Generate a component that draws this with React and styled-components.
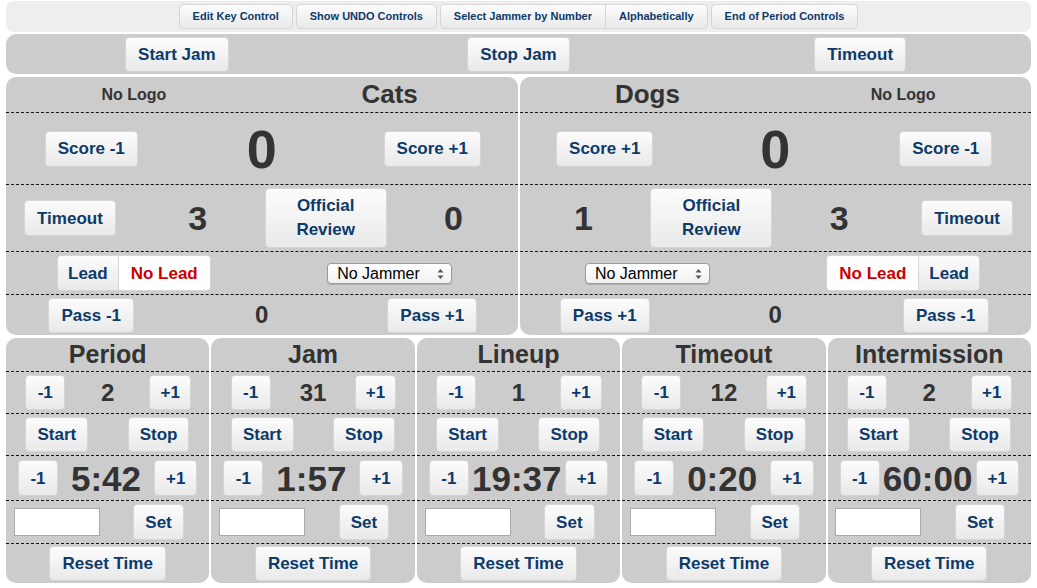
import React from "react";
import styled, { createGlobalStyle } from "styled-components";

const GlobalStyle = createGlobalStyle`
  body {
    margin: 0;
    background: #fff;
    font-family: "Liberation Sans", Arial, Helvetica, sans-serif;
  }
`;

const Page = styled.div`
  padding: 1px 6px 0;
  display: flex;
  flex-direction: column;
`;

const Toolbar = styled.div`
  height: 31px;
  background: #eee;
  border-radius: 8px;
  display: flex;
  align-items: center;
  justify-content: center;
  gap: 3px;
`;

const Btn = styled.button`
  font-family: inherit;
  font-weight: bold;
  font-size: ${(p) => p.$size || 17}px;
  color: #0c3a6b;
  height: ${(p) => p.$h || 35}px;
  min-width: ${(p) => p.$minW || 0}px;
  padding: 0 ${(p) => p.$pad ?? 12}px;
  background: linear-gradient(#fcfcfc, #e9e9e9);
  border: 1px solid #d6d6d6;
  border-radius: 4px;
  cursor: pointer;
  white-space: nowrap;
  line-height: 1;
`;

const ButtonGroup = styled.div`
  display: inline-flex;
  border-radius: 4px;
  overflow: hidden;
  border: 1px solid #d6d6d6;

  & > ${Btn} {
    border: none;
    border-radius: 0;
  }
  & > ${Btn} + ${Btn} {
    border-left: 1px solid #d6d6d6;
  }
`;

const WhiteBtn = styled(Btn)`
  background: #fff;
  color: #cc0000;
`;

const ReviewBtn = styled(Btn)`
  width: 122px;
  height: 60px;
  white-space: normal;
  line-height: 24px;
`;

const JamBar = styled.div`
  margin-top: 2px;
  height: 40px;
  background: #ccc;
  border-radius: 10px;
  display: grid;
  grid-template-columns: repeat(3, 1fr);
  align-items: center;
  justify-items: center;
`;

const Teams = styled.div`
  margin-top: 3px;
  display: grid;
  grid-template-columns: 1fr 1fr;
  gap: 2px;
`;

const Panel = styled.div`
  background: #ccc;
  border-radius: 10px;
  display: flex;
  flex-direction: column;
  overflow: hidden;
  color: #333;
`;

const Row = styled.div`
  box-sizing: border-box;
  height: ${(p) => p.$h}px;
  display: grid;
  grid-template-columns: ${(p) => p.$cols || "1fr"};
  padding: 0 ${(p) => p.$pad || 0}px;
  align-items: center;
  justify-items: center;
  border-bottom: ${(p) => (p.$last ? "none" : "1px dashed #111")};
`;

const Logo = styled.div`
  font-size: 16px;
  font-weight: bold;
`;

const TeamName = styled.div`
  font-size: 26px;
  font-weight: bold;
`;

const Count = styled.div`
  font-size: ${(p) => p.$size}px;
  font-weight: bold;
  line-height: 1;
`;

const SelectWrap = styled.div`
  position: relative;
  display: inline-block;
`;

const Select = styled.select`
  appearance: none;
  -webkit-appearance: none;
  font-family: inherit;
  font-size: 16px;
  color: #000;
  width: 125px;
  height: 21px;
  padding: 0 0 0 9px;
  background: linear-gradient(#fff, #f1f1f1);
  border: 1px solid #9a9a9a;
  border-radius: 4px;
  box-shadow: 0 1px 1px rgba(0, 0, 0, 0.15);
`;

const Arrows = styled.svg`
  position: absolute;
  right: 8px;
  top: 5px;
  pointer-events: none;
`;

const Clocks = styled.div`
  margin-top: 3px;
  display: grid;
  grid-template-columns: repeat(5, 1fr);
  gap: 2px;
`;

const Title = styled.div`
  font-size: 25px;
  font-weight: bold;
`;

const TimeInput = styled.input`
  box-sizing: border-box;
  width: 86px;
  height: 28px;
  border: 1px solid #a9a9a9;
  background: #fff;
`;

function JammerSelect() {
  return (
    <SelectWrap>
      <Select defaultValue="none">
        <option value="none">No Jammer</option>
      </Select>
      <Arrows width="7" height="12" viewBox="0 0 7 12">
        <path d="M3.5 1 L6.5 4.5 L0.5 4.5 Z M3.5 11 L6.5 7.5 L0.5 7.5 Z" fill="#555" />
      </Arrows>
    </SelectWrap>
  );
}

function Lead({ flipped }) {
  return (
    <ButtonGroup>
      {flipped ? (
        <>
          <WhiteBtn $h={34}>No Lead</WhiteBtn>
          <Btn $h={34} $pad={10}>Lead</Btn>
        </>
      ) : (
        <>
          <Btn $h={34} $pad={10}>Lead</Btn>
          <WhiteBtn $h={34}>No Lead</WhiteBtn>
        </>
      )}
    </ButtonGroup>
  );
}

function TeamPanel({ name, score, timeouts, reviews, pass, right }) {
  if (!right) {
    return (
      <Panel>
        <Row $h={36} $cols="1fr 1fr">
          <Logo>No Logo</Logo>
          <TeamName>{name}</TeamName>
        </Row>
        <Row $h={72} $cols="1fr 1fr 1fr">
          <Btn $h={36}>Score -1</Btn>
          <Count $size={54}>{score}</Count>
          <Btn $h={36}>Score +1</Btn>
        </Row>
        <Row $h={67} $cols="repeat(4, 1fr)">
          <Btn $h={36}>Timeout</Btn>
          <Count $size={34}>{timeouts}</Count>
          <ReviewBtn>Official Review</ReviewBtn>
          <Count $size={34}>{reviews}</Count>
        </Row>
        <Row $h={43} $cols="1fr 1fr">
          <Lead />
          <JammerSelect />
        </Row>
        <Row $h={40} $cols="1fr 1fr 1fr" $last>
          <Btn $h={35}>Pass -1</Btn>
          <Count $size={24}>{pass}</Count>
          <Btn $h={35}>Pass +1</Btn>
        </Row>
      </Panel>
    );
  }
  return (
    <Panel>
      <Row $h={36} $cols="1fr 1fr">
        <TeamName>{name}</TeamName>
        <Logo>No Logo</Logo>
      </Row>
      <Row $h={72} $cols="1fr 1fr 1fr">
        <Btn $h={36}>Score +1</Btn>
        <Count $size={54}>{score}</Count>
        <Btn $h={36}>Score -1</Btn>
      </Row>
      <Row $h={67} $cols="repeat(4, 1fr)">
        <Count $size={34}>{reviews}</Count>
        <ReviewBtn>Official Review</ReviewBtn>
        <Count $size={34}>{timeouts}</Count>
        <Btn $h={36}>Timeout</Btn>
      </Row>
      <Row $h={43} $cols="1fr 1fr">
        <JammerSelect />
        <Lead flipped />
      </Row>
      <Row $h={40} $cols="1fr 1fr 1fr" $last>
        <Btn $h={35}>Pass +1</Btn>
        <Count $size={24}>{pass}</Count>
        <Btn $h={35}>Pass -1</Btn>
      </Row>
    </Panel>
  );
}

function ClockPanel({ title, number, time }) {
  return (
    <Panel>
      <Row $h={34}>
        <Title>{title}</Title>
      </Row>
      <Row $h={42} $cols="1fr 1fr 1fr" $pad={8}>
        <Btn $minW={40} $pad={11}>-1</Btn>
        <Count $size={24}>{number}</Count>
        <Btn $minW={40} $pad={10}>+1</Btn>
      </Row>
      <Row $h={42} $cols="1fr 1fr">
        <Btn $pad={11}>Start</Btn>
        <Btn $pad={11}>Stop</Btn>
      </Row>
      <Row $h={45} $cols="auto 1fr auto" $pad={12}>
        <Btn $h={36} $minW={40} $pad={11}>-1</Btn>
        <Count $size={35}>{time}</Count>
        <Btn $h={36} $minW={40} $pad={11}>+1</Btn>
      </Row>
      <Row $h={43} $cols="1fr 1fr">
        <TimeInput type="text" />
        <Btn $h={36} $pad={11}>Set</Btn>
      </Row>
      <Row $h={39} $last>
        <Btn $h={35}>Reset Time</Btn>
      </Row>
    </Panel>
  );
}

const clocks = [
  { title: "Period", number: 2, time: "5:42" },
  { title: "Jam", number: 31, time: "1:57" },
  { title: "Lineup", number: 1, time: "19:37" },
  { title: "Timeout", number: 12, time: "0:20" },
  { title: "Intermission", number: 2, time: "60:00" },
];

export default function App() {
  return (
    <>
      <GlobalStyle />
      <Page>
        <Toolbar>
          <Btn $size={11} $h={25} $pad={13}>Edit Key Control</Btn>
          <Btn $size={11} $h={25} $pad={13}>Show UNDO Controls</Btn>
          <ButtonGroup>
            <Btn $size={11} $h={23} $pad={13}>Select Jammer by Number</Btn>
            <Btn $size={11} $h={23} $pad={13}>Alphabetically</Btn>
          </ButtonGroup>
          <Btn $size={11} $h={25} $pad={13}>End of Period Controls</Btn>
        </Toolbar>
        <JamBar>
          <Btn>Start Jam</Btn>
          <Btn>Stop Jam</Btn>
          <Btn>Timeout</Btn>
        </JamBar>
        <Teams>
          <TeamPanel name="Cats" score={0} timeouts={3} reviews={0} pass={0} />
          <TeamPanel name="Dogs" score={0} timeouts={3} reviews={1} pass={0} right />
        </Teams>
        <Clocks>
          {clocks.map((c) => (
            <ClockPanel key={c.title} {...c} />
          ))}
        </Clocks>
      </Page>
    </>
  );
}
